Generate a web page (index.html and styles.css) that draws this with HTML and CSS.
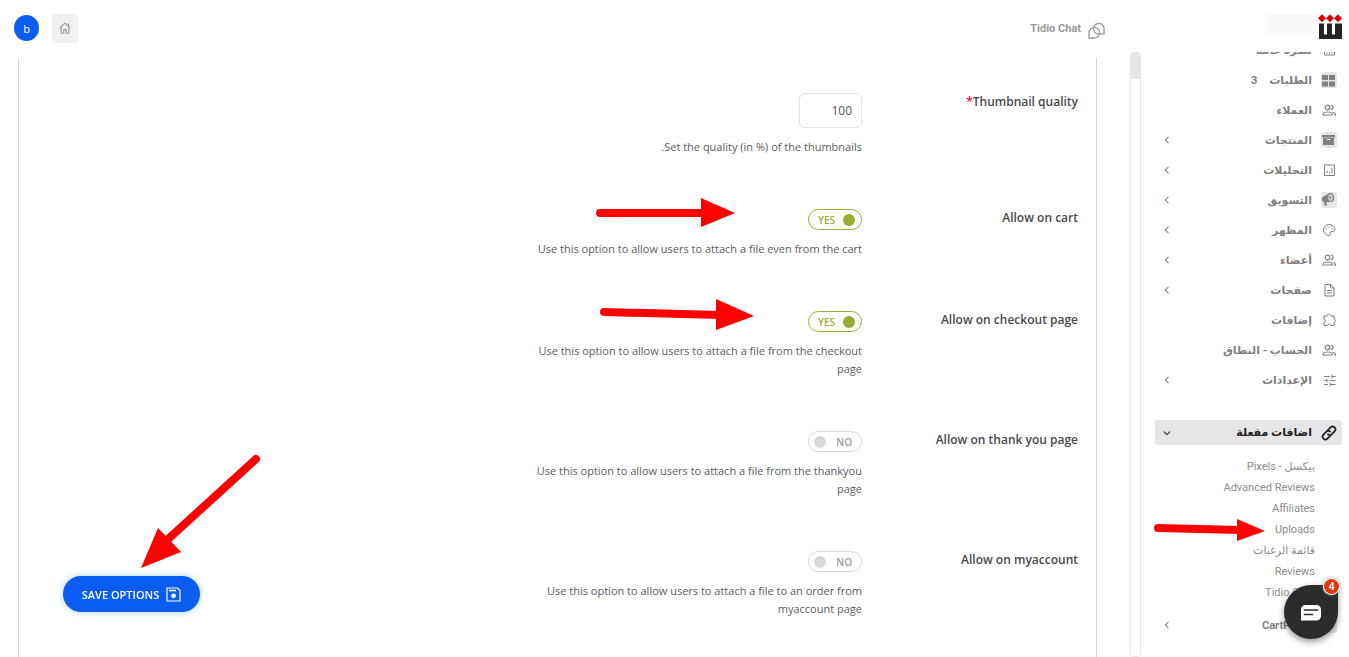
FILE: index.html
```html
<!DOCTYPE html>
<html lang="ar" dir="rtl">
<head>
    <meta charset="UTF-8">
    <meta name="viewport" content="width=device-width, initial-scale=1.0">
    <title>Uploads</title>
    <link rel="stylesheet" href="styles.css">
</head>
<body>
    <svg class="sprite" aria-hidden="true">
        <symbol id="users" viewBox="0 0 16 16">
            <g fill="none" stroke="currentColor" stroke-width="1.2">
                <circle cx="6.5" cy="5.5" r="2.3"/>
                <path d="M2.200 13v-1c0-1.300 2.200-2 4.500-2s4.500.7 4.500 2v1z"/>
                <path d="M9.800 3.300c2.700-.4 3.400 3.600 0 4.500M12 10.200c1.500.5 2.300 1.200 2.300 2v.9h-1.100"/>
            </g>
        </symbol>
        <symbol id="chevron" viewBox="0 0 10 10">
            <path d="M6.5 1.8L3.3 5l3.2 3.2" fill="none" stroke="currentColor" stroke-width="1.1"/>
        </symbol>
    </svg>

    <div class="app">
        <aside class="sidebar">
            <div class="brand">
                <svg class="logo" viewBox="0 0 24 25">
                    <path d="M4 .3l4 4-4 4-4-4zM12 .3l4 4-4 4-4-4zM20 .3l4 4-4 4-4-4z" fill="#d90000"/>
                    <path d="M1 9.500h5v11h3v-11h5v11h3v-11h7V25H1z" fill="#232323"/>
                </svg>
                <span class="store-name"></span>
            </div>
            <nav class="nav">
                <ul class="menu">
                    <li><a href="#">
                        <svg class="icon" viewBox="0 0 16 16"><path d="M3.500 3.500h10v9.500h-10zM6 9v2.500M8.500 9v2.500M11 9v2.500" fill="none" stroke="currentColor"/></svg>
                        <span>نظرة عامة</span></a></li>
                    <li><a href="#">
                        <svg class="icon boxed" viewBox="0 0 16 16"><path d="M1 3h6v5H1zM8 3h6v5H8zM1 9.500h6v5H1zM8 9.500h6v5H8z" fill="currentColor"/></svg>
                        <span>الطلبات</span><span class="count">3</span></a></li>
                    <li><a href="#">
                        <svg class="icon"><use href="#users"/></svg>
                        <span>العملاء</span></a></li>
                    <li><a href="#">
                        <svg class="icon boxed" viewBox="0 0 16 16"><path d="M1 3h13v2.500H1zM2 6h11v7H2z" fill="currentColor"/><path d="M5.500 7.500h4" stroke="#eee"/></svg>
                        <span>المنتجات</span><svg class="chevron"><use href="#chevron"/></svg></a></li>
                    <li><a href="#">
                        <svg class="icon" viewBox="0 0 16 16"><path d="M3.500 3h10v10.500h-10z" fill="none" stroke="currentColor"/><path d="M6 8.500v3M8.500 10v1.500M11 5.500v6" stroke="currentColor"/></svg>
                        <span>التحليلات</span><svg class="chevron"><use href="#chevron"/></svg></a></li>
                    <li><a href="#">
                        <svg class="icon boxed" viewBox="0 0 16 16"><path d="M1 5.500l7-4v9l-2.500-1 .5 4-2 .5-1.500-4.500L1 9z" fill="currentColor"/><ellipse cx="9.500" cy="5.500" rx="3" ry="4" fill="#ccc" stroke="currentColor" stroke-width="1.200"/><circle cx="9" cy="5.500" r="1" fill="currentColor"/></svg>
                        <span>التسويق</span><svg class="chevron"><use href="#chevron"/></svg></a></li>
                    <li><a href="#">
                        <svg class="icon" viewBox="0 0 16 16"><path d="M8 2.500a5.500 5.500 0 1 0 0 11c1.500 0 1.800-1 1.300-1.900-.6-1.200.2-2 1.200-2h1.600c1.200 0 1.900-.8 1.900-2C14 4.800 11.500 2.500 8 2.500z" fill="none" stroke="currentColor"/><path d="M4.500 7h1M6.500 4.800h1M9.500 4.800h1M11.300 7h1" stroke="currentColor" stroke-width="1.300"/></svg>
                        <span>المظهر</span><svg class="chevron"><use href="#chevron"/></svg></a></li>
                    <li><a href="#">
                        <svg class="icon"><use href="#users"/></svg>
                        <span>أعضاء</span><svg class="chevron"><use href="#chevron"/></svg></a></li>
                    <li><a href="#">
                        <svg class="icon" viewBox="0 0 16 16"><path d="M4 2.500h5.500l3.500 3.500v8H4zM9.500 2.500V6H13M6 8.500h5M6 11h5" fill="none" stroke="currentColor"/></svg>
                        <span>صفحات</span><svg class="chevron"><use href="#chevron"/></svg></a></li>
                    <li><a href="#">
                        <svg class="icon" viewBox="0 0 16 16"><path d="M3 4h3c0-2.400 3.500-2.400 3.500 0H13v3c2 .3 2 3 0 3.300V13.500h-3c-.5-1.900-3.300-1.900-3.700 0H3v-3c1.900-.5 1.900-3 0-3.500z" fill="none" stroke="currentColor"/></svg>
                        <span>إضافات</span></a></li>
                    <li><a href="#">
                        <svg class="icon"><use href="#users"/></svg>
                        <span>الحساب - النطاق</span></a></li>
                    <li><a href="#">
                        <svg class="icon" viewBox="0 0 16 16"><path d="M3 4.500h6M11 4.500h3.500M11 2.500v4M3 8.500h3M8.500 8.500h6M6 6.500v4M3 12.500h4M9 12.500h5.500M9 10.500v4" fill="none" stroke="currentColor"/></svg>
                        <span>الإعدادات</span><svg class="chevron"><use href="#chevron"/></svg></a></li>
                </ul>

                <a class="active" href="#">
                    <svg class="icon" viewBox="0 0 16 16"><g transform="rotate(-45 8 8)" fill="none" stroke="currentColor" stroke-width="1.800"><path d="M7.500 10.800H3a2.800 2.800 0 0 1 0-5.600h4a2.800 2.800 0 0 1 2.700 3.300"/><path d="M8.500 5.200H13a2.800 2.800 0 0 1 0 5.600H9a2.800 2.800 0 0 1-2.700-3.300"/></g></svg>
                    <span>اضافات مفعلة</span>
                    <svg class="chevron open"><use href="#chevron"/></svg>
                </a>
                <ul class="submenu">
                    <li><a href="#">بيكسل - Pixels</a></li>
                    <li><a href="#">Advanced Reviews</a></li>
                    <li><a href="#">Affiliates</a></li>
                    <li><a href="#">Uploads</a></li>
                    <li><a href="#">قائمة الرغبات</a></li>
                    <li><a href="#">Reviews</a></li>
                    <li><a href="#">Tidio Chat</a></li>
                </ul>
                <ul class="menu">
                    <li><a href="#">
                        <svg class="icon boxed" viewBox="0 0 16 16"><path d="M4 8h8" stroke="currentColor"/></svg>
                        <span>CartFlows</span><svg class="chevron"><use href="#chevron"/></svg></a></li>
                </ul>
            </nav>
        </aside>

        <main class="main">
            <header class="topbar">
                <a class="tidio" href="#">
                    <svg viewBox="0 0 17 17"><g fill="none" stroke="currentColor" stroke-width="1.500"><path d="M1 16v-5.500A5.300 5.300 0 1 1 6.300 16z"/><path d="M16 12V6.200a5.300 5.300 0 1 0-5.300 5.800z"/></g></svg>
                    <span>Tidio Chat</span>
                </a>
                <div class="tools">
                    <a class="home" href="#" aria-label="Home">
                        <svg viewBox="0 0 12 12"><path d="M.8 6L6 1.200 11.200 6M9.500 4V1.200M2.200 5.500v5.700h2.600V7.500h2.400v3.700h2.600V5.500" fill="none" stroke="currentColor" stroke-width="1.100"/></svg>
                    </a>
                    <button class="avatar" type="button">b</button>
                </div>
            </header>

            <div class="content">
                <div class="scroll"><div class="thumb"></div></div>
                <form class="panel">
                    <div class="row">
                        <label class="name" for="quality">Thumbnail quality<span class="required">*</span></label>
                        <div class="field">
                            <input class="number" type="number" id="quality" value="100">
                            <p>Set the quality (in %) of the thumbnails.</p>
                        </div>
                    </div>
                    <div class="row">
                        <label class="name" for="cart">Allow on cart</label>
                        <div class="field">
                            <label class="toggle on"><input type="checkbox" id="cart" checked><span>YES</span></label>
                            <p>Use this option to allow users to attach a file even from the cart</p>
                        </div>
                    </div>
                    <div class="row">
                        <label class="name" for="checkout">Allow on checkout page</label>
                        <div class="field">
                            <label class="toggle on"><input type="checkbox" id="checkout" checked><span>YES</span></label>
                            <p>Use this option to allow users to attach a file from the checkout page</p>
                        </div>
                    </div>
                    <div class="row">
                        <label class="name" for="thankyou">Allow on thank you page</label>
                        <div class="field">
                            <label class="toggle"><input type="checkbox" id="thankyou"><span>NO</span></label>
                            <p>Use this option to allow users to attach a file from the thankyou page</p>
                        </div>
                    </div>
                    <div class="row">
                        <label class="name" for="myaccount">Allow on myaccount</label>
                        <div class="field">
                            <label class="toggle"><input type="checkbox" id="myaccount"><span>NO</span></label>
                            <p>Use this option to allow users to attach a file to an order from myaccount page</p>
                        </div>
                    </div>
                </form>
            </div>
        </main>
    </div>

    <button class="save" type="button">
        <svg viewBox="0 0 15 15"><path d="M1 1h10.500L14 3.500V14H1z" fill="none" stroke="currentColor" stroke-width="1.200"/><path d="M3 3.500h7" stroke="currentColor" stroke-width="1.600"/><circle cx="7.500" cy="8.800" r="2.400" fill="currentColor"/></svg>
        <span>SAVE OPTIONS</span>
    </button>

    <button class="chat" type="button" aria-label="Chat">
        <svg viewBox="0 0 20 16"><path d="M4.500 0h11A4.500 4.500 0 0 1 20 4.500v6.500a4.500 4.500 0 0 1-4.500 4.500H0v-11A4.500 4.500 0 0 1 4.500 0z" fill="#fff"/><path d="M3.500 5h13M3.500 9.500h8" stroke="#2b2b2b" stroke-width="1.700" stroke-linecap="round"/></svg>
        <span class="badge">4</span>
    </button>

    <svg class="arrows" aria-hidden="true">
        <g stroke="#f00" stroke-width="8" stroke-linecap="round">
            <path d="M600 213h104M604 312l116 3M1158 528l82 2M256 459l-90 82"/>
        </g>
        <path d="M701 198l34 15-34 14zM716 299l38 17-38 14zM1237 519l28 12-28 10zM158 528l23 24-40 16z" fill="#f00"/>
    </svg>
</body>
</html>
```

FILE: styles.css
```css
* {
    box-sizing: border-box;
}
body {
    margin: 0;
    background-color: #fff;
    color: #555;
    font-family: "Open Sans", "DejaVu Sans", sans-serif;
    font-size: 12px;
    overflow: hidden;
}
ul {
    list-style: none;
    margin: 0;
    padding: 0;
}
p {
    margin: 0;
}
a {
    color: inherit;
    text-decoration: none;
}
button {
    border: none;
    padding: 0;
    font-family: inherit;
    cursor: pointer;
}
.sprite {
    display: none;
}
.app {
    display: flex;
    height: 100vh;
}

/* sidebar */
.sidebar {
    display: flex;
    flex-direction: column;
    flex: none;
    width: 208px;
}
.brand {
    display: flex;
    flex: none;
    gap: 3px;
    height: 52px;
    padding: 14px 7px 0;
}
.logo {
    width: 24px;
    height: 25px;
}
.store-name {
    width: 48px;
    height: 21px;
    background-color: #fafafa;
    box-shadow: 0 0 3px #fafafa;
}
.nav {
    flex: 1;
    overflow: hidden;
    padding: 0 7px 0 14px;
    color: #808080;
    font-family: Roboto, "DejaVu Sans", sans-serif;
    font-size: 11px;
}
.menu:first-child {
    margin-top: -17px;
}
.menu a, .active {
    display: flex;
    align-items: center;
    gap: 9px;
    height: 30px;
    padding: 0 5px 0 7px;
    font-weight: bold;
}
.icon {
    flex: none;
    width: 16px;
    height: 16px;
}
.boxed {
    background-color: #e6e6e9;
    border-radius: 3px;
}
.count {
    margin-right: 3px;
}
.chevron {
    width: 10px;
    height: 10px;
    margin-right: auto;
    color: #7089a0;
}
.nav .active {
    height: 25px;
    margin-top: 25px;
    border-radius: 3px;
    background-color: #e6e6e9;
    color: #222;
}
.open {
    color: #444;
    transform: rotate(-90deg);
}
.submenu {
    padding: 11px 27px 7px 0;
    color: #8c8c8c;
}
.submenu a {
    display: block;
    line-height: 21px;
}

/* main column */
.main {
    display: flex;
    flex: 1;
    flex-direction: column;
    min-width: 0;
}
.topbar {
    display: flex;
    flex: none;
    align-items: center;
    justify-content: space-between;
    height: 52px;
    padding: 4px 36px 0 14px;
}
.tidio {
    display: flex;
    align-items: center;
    gap: 7px;
    color: #999;
    font-family: Roboto, sans-serif;
    font-size: 11px;
    font-weight: bold;
}
.tidio svg {
    width: 17px;
    height: 17px;
    margin-top: 4px;
    color: #a0a3aa;
}
.tools {
    display: flex;
    align-items: center;
    gap: 13px;
}
.home {
    display: flex;
    align-items: center;
    justify-content: center;
    width: 26px;
    height: 29px;
    border-radius: 3px;
    background-color: #f1f1f4;
    color: #999;
}
.home svg {
    width: 12px;
    height: 12px;
}
.avatar {
    width: 25px;
    height: 26px;
    border-radius: 50%;
    background-color: #0b5cf0;
    color: #fff;
    font-size: 11px;
}
.content {
    display: flex;
    flex: 1;
    gap: 33px;
    min-height: 0;
}
.scroll {
    flex: none;
    width: 11px;
    border: 1px solid #e6e6e9;
    border-radius: 4px;
}
.thumb {
    height: 26px;
    background-color: #e6e6e9;
}
.panel {
    flex: 1;
    margin: 6px 0 0 18px;
    padding: 35px 18px 0;
    border: solid #d5d5d5;
    border-width: 0 1px;
    overflow: hidden;
}
.row {
    display: flex;
    padding-bottom: 53px;
}
.name {
    flex: none;
    width: 216px;
    color: #4a4a4a;
    font-weight: 600;
    line-height: 18px;
}
.required {
    color: #e6003c;
}
.field {
    width: 336px;
}
.field p {
    margin-top: 10px;
    color: #5c5c5c;
    font-size: 11px;
    line-height: 18px;
}
.number {
    display: block;
    width: 63px;
    height: 35px;
    padding: 0 9px;
    border: 1px solid #e2e2e2;
    border-radius: 6px;
    color: #555;
    font-family: inherit;
    font-size: 12px;
}
.toggle {
    display: flex;
    flex-direction: row-reverse;
    align-items: center;
    justify-content: space-between;
    width: 54px;
    height: 21px;
    padding: 0 9px 0 5px;
    border: 1px solid #d8d8d8;
    border-radius: 11px;
    color: #999;
    font-size: 10px;
    font-weight: 600;
}
.toggle input {
    appearance: none;
    width: 12px;
    height: 12px;
    margin: 0;
    border-radius: 50%;
    background-color: #d8d8d8;
}
.toggle.on {
    flex-direction: row;
    padding: 0 6px 0 9px;
    border-color: #9aab36;
    color: #9aab36;
}
.toggle.on input {
    background-color: #9aab36;
}

/* floating items */
.save {
    position: fixed;
    left: 63px;
    bottom: 45px;
    display: flex;
    align-items: center;
    justify-content: center;
    gap: 7px;
    width: 137px;
    height: 36px;
    border-radius: 18px;
    background-color: #0b5cf0;
    box-shadow: 0 0 7px #a5cfe0;
    color: #fff;
    font-size: 11px;
    font-weight: 600;
}
.save svg {
    width: 15px;
    height: 15px;
}
.chat {
    position: fixed;
    right: 11px;
    bottom: 18px;
    width: 54px;
    height: 54px;
    border-radius: 50% 4px 50% 50%;
    background-color: #2b2b2b;
    box-shadow: 0 3px 6px rgba(0, 0, 0, 0.4);
}
.chat svg {
    width: 20px;
    height: 16px;
    vertical-align: middle;
}
.badge {
    position: absolute;
    top: -6px;
    right: -1px;
    width: 15px;
    height: 15px;
    border-radius: 50%;
    background-color: #e0360a;
    box-shadow: 0 0 0 1px #fff, 0 0 3px 1px #888;
    color: #fff;
    font-size: 10px;
    font-weight: bold;
    line-height: 15px;
}
.arrows {
    position: fixed;
    top: 0;
    left: 0;
    width: 100%;
    height: 100%;
    pointer-events: none;
}
```
